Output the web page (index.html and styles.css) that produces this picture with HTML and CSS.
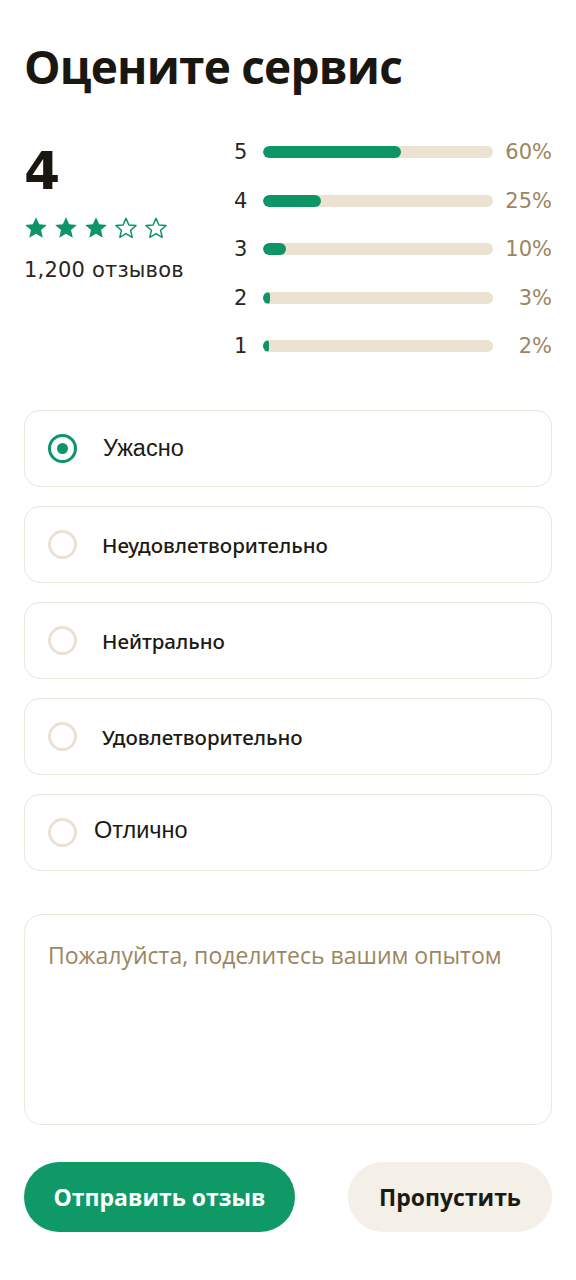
FILE: index.html
```html
<!DOCTYPE html>
<html lang="ru">
<head>
<meta charset="utf-8">
<link rel="stylesheet" href="styles.css">
</head>
<body>
<main class="page">
  <h1 class="title">Оцените сервис</h1>

  <section class="summary">
    <div class="score">
      <div class="score-value">4</div>
      <div class="stars">
        <svg class="star" viewBox="0 0 24 24"><path class="full" d="M12 1.2l3.2 7.1 7.7.7-5.9 5.1 1.8 7.6L12 17.7l-6.8 4 1.8-7.6L1.1 9l7.7-.7z"/></svg>
        <svg class="star" viewBox="0 0 24 24"><path class="full" d="M12 1.2l3.2 7.1 7.7.7-5.9 5.1 1.8 7.6L12 17.7l-6.8 4 1.8-7.6L1.1 9l7.7-.7z"/></svg>
        <svg class="star" viewBox="0 0 24 24"><path class="full" d="M12 1.2l3.2 7.1 7.7.7-5.9 5.1 1.8 7.6L12 17.7l-6.8 4 1.8-7.6L1.1 9l7.7-.7z"/></svg>
        <svg class="star" viewBox="0 0 24 24"><path class="empty" d="M12 2.4l2.9 6.6 7.1.6-5.4 4.7 1.6 7-6.2-3.7-6.2 3.7 1.6-7L2 9.6l7.1-.6z"/></svg>
        <svg class="star" viewBox="0 0 24 24"><path class="empty" d="M12 2.4l2.9 6.6 7.1.6-5.4 4.7 1.6 7-6.2-3.7-6.2 3.7 1.6-7L2 9.6l7.1-.6z"/></svg>
      </div>
      <div class="reviews">1,200 отзывов</div>
    </div>
    <div class="bars">
      <div class="bar-row"><span class="bar-label">5</span><div class="track"><div class="fill" style="width:60%"></div></div><span class="pct">60%</span></div>
      <div class="bar-row"><span class="bar-label">4</span><div class="track"><div class="fill" style="width:25%"></div></div><span class="pct">25%</span></div>
      <div class="bar-row"><span class="bar-label">3</span><div class="track"><div class="fill" style="width:10%"></div></div><span class="pct">10%</span></div>
      <div class="bar-row"><span class="bar-label">2</span><div class="track"><div class="fill" style="width:3%"></div></div><span class="pct">3%</span></div>
      <div class="bar-row"><span class="bar-label">1</span><div class="track"><div class="fill" style="width:2%"></div></div><span class="pct">2%</span></div>
    </div>
  </section>

  <section class="options">
    <label class="option"><span class="radio checked"></span><span class="opt-text alt">Ужасно</span></label>
    <label class="option"><span class="radio"></span><span class="opt-text">Неудовлетворительно</span></label>
    <label class="option"><span class="radio"></span><span class="opt-text">Нейтрально</span></label>
    <label class="option"><span class="radio"></span><span class="opt-text">Удовлетворительно</span></label>
    <label class="option"><span class="radio"></span><span class="opt-text alt tight">Отлично</span></label>
  </section>

  <div class="comment">Пожалуйста, поделитесь вашим опытом</div>

  <div class="actions">
    <button class="btn primary">Отправить отзыв</button>
    <button class="btn secondary">Пропустить</button>
  </div>
</main>
</body>
</html>
```

FILE: styles.css
```css
* { box-sizing: border-box; }
html, body { margin: 0; padding: 0; background: #ffffff; }
body { font-family: "Open Sans", "Noto Sans", sans-serif; color: #1c1a14; }

.page {
  width: 576px;
  padding: 36px 24px 0 24px;
}

.title {
  margin: 0;
  font-family: "Open Sans", sans-serif;
  font-weight: 700;
  font-size: 46px;
  line-height: 60px;
  letter-spacing: -0.8px;
  color: #1a1710;
}

.summary {
  display: flex;
  margin-top: 43px;
}

.score { width: 210px; padding-top: 2px; }

.score-value {
  font-family: "DejaVu Sans", sans-serif;
  font-weight: 700;
  font-size: 52px;
  line-height: 60px;
  color: #1a1710;
}

.stars {
  display: flex;
  gap: 6px;
  margin-top: 15px;
}
.star { width: 24px; height: 24px; }
.star .full { fill: #0d9566; }
.star .empty { fill: none; stroke: #0d9566; stroke-width: 1.5; stroke-linejoin: round; }

.reviews {
  margin-top: 16px;
  font-family: "DejaVu Sans", sans-serif;
  font-size: 21px;
  letter-spacing: 0.2px;
  line-height: 28px;
  color: #2a2620;
}

.bars {
  flex: 1;
  display: flex;
  flex-direction: column;
  gap: 22.5px;
}
.bar-row {
  display: flex;
  align-items: center;
  height: 26px;
}
.bar-label {
  width: 29px;
  font-family: "DejaVu Sans", sans-serif;
  font-size: 21px;
  color: #2a2620;
}
.track {
  width: 230px;
  height: 12px;
  background: #ebe2d2;
  border-radius: 6px;
  overflow: hidden;
}
.fill {
  height: 100%;
  min-width: 6px;
  background: #0d9566;
  border-radius: 6px;
}
.pct {
  flex: 1;
  text-align: right;
  font-family: "DejaVu Sans", sans-serif;
  font-size: 21px;
  color: #9a8660;
}

.options {
  display: flex;
  flex-direction: column;
  gap: 19px;
  margin-top: 51px;
}
.option {
  display: flex;
  align-items: center;
  height: 77px;
  padding-left: 23px;
  border: 1.5px solid #ece6da;
  border-radius: 16px;
}
.radio {
  width: 29px;
  height: 29px;
  border-radius: 50%;
  border: 3px solid #e8e2d6;
  flex: none;
  display: flex;
  align-items: center;
  justify-content: center;
}
.radio.checked { border-color: #0d9566; }
.radio.checked::after {
  content: "";
  width: 11px;
  height: 11px;
  border-radius: 50%;
  background: #0d9566;
}
.opt-text {
  margin-left: 25px;
  font-family: "Noto Sans", sans-serif;
  font-weight: 500;
  font-size: 20.5px;
  color: #1c1a14;
}
.opt-text.alt {
  font-family: "Liberation Sans", "Roboto", sans-serif;
  font-weight: 400;
  font-size: 23.5px;
  margin-left: 26px;
}
.opt-text.tight { margin-left: 17px; margin-top: -4px; }

.comment {
  margin-top: 43px;
  height: 211px;
  border: 1.5px solid #ece6da;
  border-radius: 18px;
  padding: 24px 23px;
  font-family: "Open Sans", sans-serif;
  font-size: 23px;
  line-height: 32px;
  color: #9a8660;
}

.actions {
  display: flex;
  justify-content: space-between;
  margin-top: 37px;
}
.btn {
  height: 70px;
  border: none;
  border-radius: 35px;
  font-family: "Open Sans", sans-serif;
  font-weight: 700;
  font-size: 23px;
}
.btn.primary {
  width: 271px;
  background: #0f9966;
  color: #ffffff;
}
.btn.secondary {
  width: 204px;
  background: #f4efe7;
  color: #1c1a14;
}
```
